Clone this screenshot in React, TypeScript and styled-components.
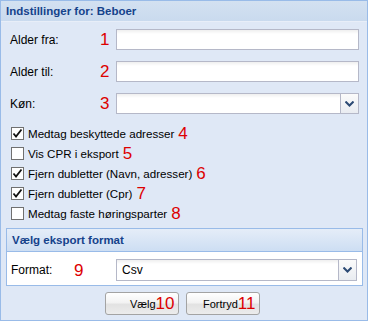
import * as React from "react";
import styled, { createGlobalStyle } from "styled-components";

const Global = createGlobalStyle`
    html, body {
        margin: 0;
        padding: 0;
        background: #ffffff;
    }
    body {
        font-family: "Liberation Sans", Arial, sans-serif;
        font-size: 12px;
    }
`;

const Panel = styled.div`
    width: 366px;
    border: 1px solid #99bbe8;
    background: #dfe8f6;
    display: flex;
    flex-direction: column;
`;

const PanelHeader = styled.div`
    flex-shrink: 0;
    height: 20px;
    display: flex;
    align-items: center;
    padding-left: 5px;
    background: linear-gradient(#d3e1f1, #c9daee);
    border-bottom: 1px solid #e8eef8;
    color: #15428b;
    font-weight: bold;
    font-size: 11.5px;
`;

const PanelBody = styled.div`
    display: flex;
    flex-direction: column;
    padding: 7px 8px 5px 9px;
`;

const Fields = styled.div`
    display: flex;
    flex-direction: column;
    gap: 11px;
`;

const FieldRow = styled.div`
    display: flex;
    align-items: center;
    height: 21px;
`;

const Label = styled.span<{ width: number }>`
    width: ${(p) => p.width}px;
    flex-shrink: 0;
    color: #000;
    font-size: 12px;
`;

const Num = styled.span<{ size?: number }>`
    color: #dd0000;
    font-size: ${(p) => p.size || 17}px;
    line-height: 1;
`;

const NumBox = styled.span<{ width?: number }>`
    width: ${(p) => p.width || 16}px;
    flex-shrink: 0;
    display: flex;
    justify-content: flex-start;
`;

const TextInput = styled.div`
    flex: 1;
    height: 19px;
    border: 1px solid #b5b8c8;
    background: linear-gradient(#efefef, #ffffff 4px, #ffffff);
    display: flex;
    align-items: center;
    padding-left: 5px;
    font-size: 12px;
`;

const Combo = styled.div<{ h?: number }>`
    flex: 1;
    height: ${(p) => p.h || 21}px;
    display: flex;
`;

const ComboText = styled(TextInput)`
    height: auto;
    border-right: none;
`;

const Trigger = styled.div`
    width: 17px;
    border: 1px solid #b5b8c8;
    background: linear-gradient(#fbfbfb, #e9ecf1);
    display: flex;
    align-items: center;
    justify-content: center;
`;

const Checks = styled.div`
    display: flex;
    flex-direction: column;
    margin-top: 9px;
`;

const CheckRow = styled.label`
    display: flex;
    align-items: center;
    height: 20px;
    gap: 4px;
    font-size: 11.6px;
`;

const Box = styled.span`
    width: 11px;
    height: 11px;
    border: 1px solid #707070;
    background: #ffffff;
    display: flex;
    align-items: center;
    justify-content: center;
    margin-left: 1px;
`;

const FieldSet = styled.div`
    margin: 5px -4px 0 -4px;
    border: 1px solid #99bbe8;
    display: flex;
    flex-direction: column;
`;

const FieldSetHeader = styled.div`
    height: 22px;
    display: flex;
    align-items: center;
    padding-left: 5px;
    background: linear-gradient(#e5edf8, #cddef3);
    border-bottom: 1px solid #99bbe8;
    color: #15428b;
    font-weight: bold;
    font-size: 11.5px;
`;

const FieldSetBody = styled.div`
    background: #ffffff;
    padding: 7px 5px 4px 4px;
    display: flex;
    align-items: center;
`;

const Buttons = styled.div`
    display: flex;
    justify-content: center;
    gap: 7px;
    margin-top: 6px;
    padding-right: 5px;
`;

const Button = styled.div`
    width: 74px;
    height: 23px;
    border: 1px solid #a3a3a3;
    border-radius: 3px;
    background: linear-gradient(#ffffff, #f3f3f3 45%, #e2e2e2 55%, #ececec);
    display: flex;
    align-items: center;
    justify-content: flex-end;
    padding-right: 3px;
    box-sizing: border-box;
    font-size: 11px;
`;

const Arrow = () => (
    <svg width="9" height="6" viewBox="0 0 9 6">
        <path d="M0.5 0.5 L4.5 4.5 L8.5 0.5" fill="none" stroke="#2c4a74" strokeWidth="2" />
    </svg>
);

const Tick = () => (
    <svg width="11" height="11" viewBox="0 0 11 11">
        <path d="M1.5 5.5 L4 8.5 L9.5 1.5" fill="none" stroke="#111" strokeWidth="1.8" />
    </svg>
);

const checks = [
    { text: "Medtag beskyttede adresser", on: true, n: "4" },
    { text: "Vis CPR i eksport", on: false, n: "5" },
    { text: "Fjern dubletter (Navn, adresser)", on: true, n: "6" },
    { text: "Fjern dubletter (Cpr)", on: true, n: "7" },
    { text: "Medtag faste høringsparter", on: false, n: "8" },
];

const App = () => {
    return (
        <>
            <Global />
            <Panel>
                <PanelHeader>Indstillinger for: Beboer</PanelHeader>
                <PanelBody>
                    <Fields>
                        <FieldRow>
                            <Label width={90}>Alder fra:</Label>
                            <NumBox><Num>1</Num></NumBox>
                            <TextInput />
                        </FieldRow>
                        <FieldRow>
                            <Label width={90}>Alder til:</Label>
                            <NumBox><Num>2</Num></NumBox>
                            <TextInput />
                        </FieldRow>
                        <FieldRow>
                            <Label width={90}>Køn:</Label>
                            <NumBox><Num>3</Num></NumBox>
                            <Combo>
                                <ComboText />
                                <Trigger><Arrow /></Trigger>
                            </Combo>
                        </FieldRow>
                    </Fields>
                    <Checks>
                        {checks.map((c) => (
                            <CheckRow key={c.n}>
                                <Box>{c.on && <Tick />}</Box>
                                <span>{c.text}</span>
                                <Num>{c.n}</Num>
                            </CheckRow>
                        ))}
                    </Checks>
                    <FieldSet>
                        <FieldSetHeader>Vælg eksport format</FieldSetHeader>
                        <FieldSetBody>
                            <Label width={63}>Format:</Label>
                            <NumBox width={42}><Num>9</Num></NumBox>
                            <Combo h={22}>
                                <ComboText>Csv</ComboText>
                                <Trigger><Arrow /></Trigger>
                            </Combo>
                        </FieldSetBody>
                    </FieldSet>
                    <Buttons>
                        <Button>Vælg<Num>10</Num></Button>
                        <Button>Fortryd<Num>11</Num></Button>
                    </Buttons>
                </PanelBody>
            </Panel>
        </>
    );
};

export default App;
